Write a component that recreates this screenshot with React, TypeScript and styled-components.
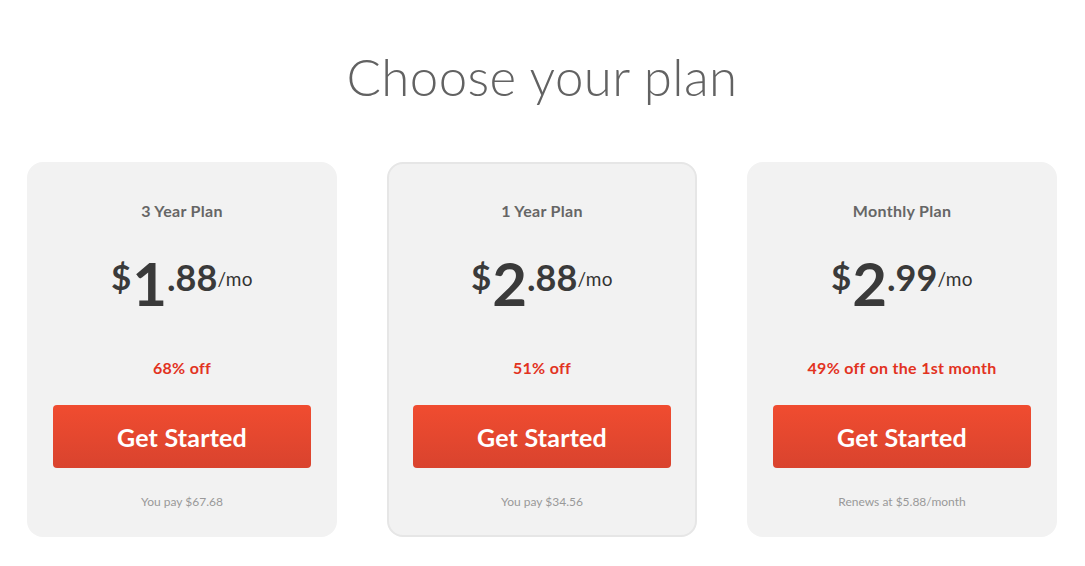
import React from 'react';
import styled, { createGlobalStyle } from 'styled-components';

const GlobalStyle = createGlobalStyle`
  html, body {
    margin: 0;
    padding: 0;
    background: #ffffff;
    font-family: Lato, "Open Sans", "Liberation Sans", sans-serif;
  }
`;

const Page = styled.div`
  width: 1084px;
  padding-top: 47px;
  display: flex;
  flex-direction: column;
  align-items: center;
`;

const Title = styled.h1`
  margin: 0;
  font-size: 51px;
  font-weight: 300;
  line-height: 60px;
  color: #626262;
  letter-spacing: 0.4px;
`;

const Cards = styled.div`
  margin-top: 55px;
  display: grid;
  grid-template-columns: repeat(3, 310px);
  gap: 50px;
`;

const Card = styled.div<{ $featured?: boolean }>`
  box-sizing: border-box;
  height: 375px;
  background: #f2f2f2;
  border-radius: 16px;
  border: 2px solid ${p => (p.$featured ? '#e6e6e6' : '#f2f2f2')};
  padding: 37px 24px 0;
  display: flex;
  flex-direction: column;
  align-items: center;
`;

const PlanName = styled.div`
  font-size: 16px;
  font-weight: 700;
  color: #666666;
  line-height: 20px;
  letter-spacing: 0.3px;
`;

const Price = styled.div`
  margin-top: 32px;
  height: 70px;
  display: flex;
  align-items: flex-start;
  color: #3a3a3a;
  font-weight: 700;
`;

const Currency = styled.span`
  font-size: 35px;
  line-height: 1;
  margin-top: 6px;
  margin-right: 1px;
`;

const Dollars = styled.span`
  font-size: 60px;
  line-height: 1;
`;

const Cents = styled.span`
  font-size: 36px;
  line-height: 1;
  margin-top: 6px;
`;

const Period = styled.span`
  font-size: 19px;
  font-weight: 400;
  line-height: 1;
  margin-top: 16px;
  letter-spacing: 0.4px;
  color: #333333;
`;

const Discount = styled.div`
  margin-top: 35px;
  font-size: 16px;
  font-weight: 700;
  color: #e2331f;
  line-height: 20px;
  letter-spacing: 0.3px;
`;

const Button = styled.button`
  margin-top: 27px;
  width: 258px;
  height: 63px;
  border: none;
  border-radius: 4px;
  background: linear-gradient(to bottom, #f04c30, #d9432e);
  color: #ffffff;
  font-family: inherit;
  font-size: 25px;
  font-weight: 700;
  letter-spacing: 0.2px;
  cursor: pointer;
`;

const Note = styled.div`
  margin-top: 26px;
  font-size: 12px;
  color: #999999;
  line-height: 16px;
`;

const plans = [
  { name: '3 Year Plan', dollars: '1', cents: '.88', discount: '68% off', note: 'You pay $67.68' },
  { name: '1 Year Plan', dollars: '2', cents: '.88', discount: '51% off', note: 'You pay $34.56', featured: true },
  { name: 'Monthly Plan', dollars: '2', cents: '.99', discount: '49% off on the 1st month', note: 'Renews at $5.88/month' },
];

export default function App() {
  return (
    <>
      <GlobalStyle />
      <Page>
        <Title>Choose your plan</Title>
        <Cards>
          {plans.map(plan => (
            <Card key={plan.name} $featured={plan.featured}>
              <PlanName>{plan.name}</PlanName>
              <Price>
                <Currency>$</Currency>
                <Dollars>{plan.dollars}</Dollars>
                <Cents>{plan.cents}</Cents>
                <Period>/mo</Period>
              </Price>
              <Discount>{plan.discount}</Discount>
              <Button>Get Started</Button>
              <Note>{plan.note}</Note>
            </Card>
          ))}
        </Cards>
      </Page>
    </>
  );
}
